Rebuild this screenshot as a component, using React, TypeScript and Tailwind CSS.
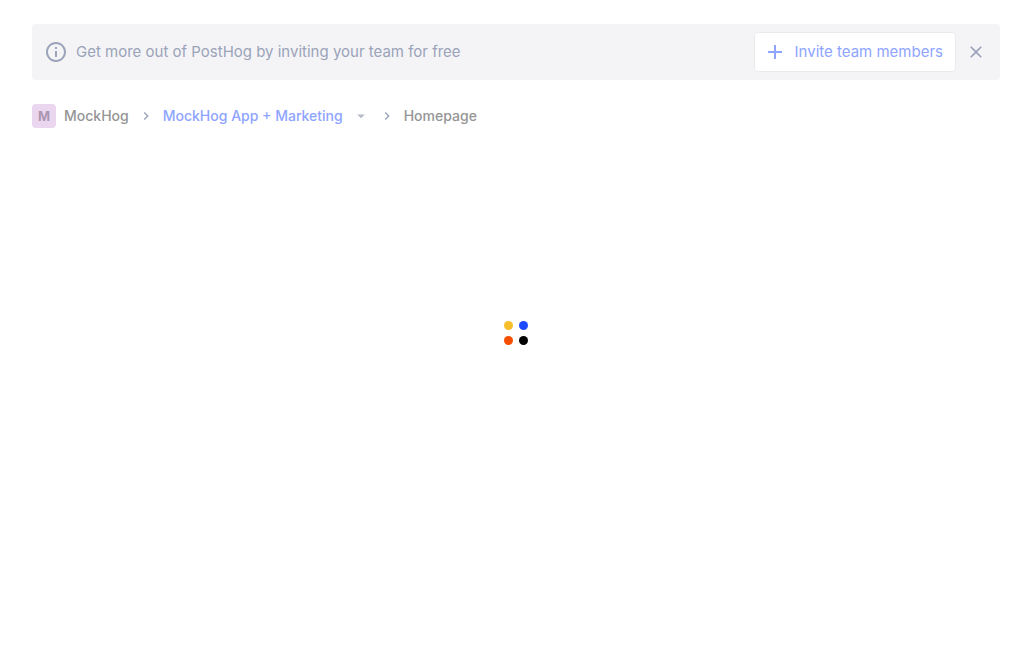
import React from 'react';

function InfoIcon() {
  return (
    <svg viewBox="0 0 24 24" className="size-6 shrink-0" fill="currentColor" aria-hidden="true">
      <path d="M11 7h2v2h-2zm0 4h2v6h-2zm1-9C6.48 2 2 6.48 2 12s4.480 10 10 10 10-4.480 10-10S17.520 2 12 2zm0 18c-4.410 0-8-3.590-8-8s3.590-8 8-8 8 3.590 8 8-3.590 8-8 8z" />
    </svg>
  );
}

function PlusIcon() {
  return (
    <svg viewBox="0 0 24 24" className="size-6" fill="currentColor" aria-hidden="true">
      <path d="M19 13h-6v6h-2v-6H5v-2h6V5h2v6h6z" />
    </svg>
  );
}

function CloseIcon() {
  return (
    <svg viewBox="0 0 24 24" className="size-5" fill="currentColor" aria-hidden="true">
      <path d="M19 6.410 17.590 5 12 10.590 6.410 5 5 6.410 10.590 12 5 17.590 6.410 19 12 13.410 17.590 19 19 17.590 13.410 12z" />
    </svg>
  );
}

function ChevronRight() {
  return (
    <svg viewBox="0 0 24 24" className="size-4 shrink-0 text-[#9aa3b8]" fill="currentColor" aria-hidden="true">
      <path d="M10 6 8.590 7.410 13.170 12l-4.580 4.590L10 18l6-6z" />
    </svg>
  );
}

function Spinner() {
  return (
    <svg viewBox="0 0 24 24" className="size-6" role="img" aria-label="Loading">
      <circle cx="4.500" cy="4.500" r="4.500" fill="#f7bd2b" />
      <circle cx="19.500" cy="4.500" r="4.500" fill="#1d4aff" />
      <circle cx="4.500" cy="19.500" r="4.500" fill="#f54e00" />
      <circle cx="19.500" cy="19.500" r="4.500" fill="#000" />
    </svg>
  );
}

export default function App() {
  return (
    <div className="flex min-h-screen flex-col bg-white px-8 pt-6 font-['Inter',sans-serif] text-[15px]">
      <section className="flex min-h-14 items-center gap-2 rounded bg-[#f4f4f7] px-3 py-2 text-[#9aa3b8]">
        <InfoIcon />
        <p className="flex-1">Get more out of PostHog by inviting your team for free</p>
        <button className="flex h-10 items-center gap-2 rounded border border-[#ebebed] bg-white pr-3 pl-2 text-[#8ea4ff]">
          <PlusIcon />
          <span>Invite team members</span>
        </button>
        <button aria-label="Close" className="flex size-6 items-center justify-center">
          <CloseIcon />
        </button>
      </section>
      <nav aria-label="Breadcrumb" className="mt-6 flex h-6 items-center gap-[9px] text-sm font-medium text-[#959595]">
        <a href="#org" className="flex items-center gap-2">
          <span className="flex size-6 items-center justify-center rounded bg-[#ebd6f0] text-[13px] font-bold text-[#ab97b1]">M</span>
          <span>MockHog</span>
        </a>
        <ChevronRight />
        <button className="flex items-center gap-[9px] text-[#8ea4ff]">
          <span>MockHog App + Marketing</span>
          <svg viewBox="0 0 24 24" className="size-[18px] text-[#b5bac9]" fill="currentColor" aria-hidden="true">
            <path d="m7 10 5 5 5-5z" />
          </svg>
        </button>
        <ChevronRight />
        <span>Homepage</span>
      </nav>
      <main className="flex justify-center pt-[193px]">
        <Spinner />
      </main>
    </div>
  );
}
